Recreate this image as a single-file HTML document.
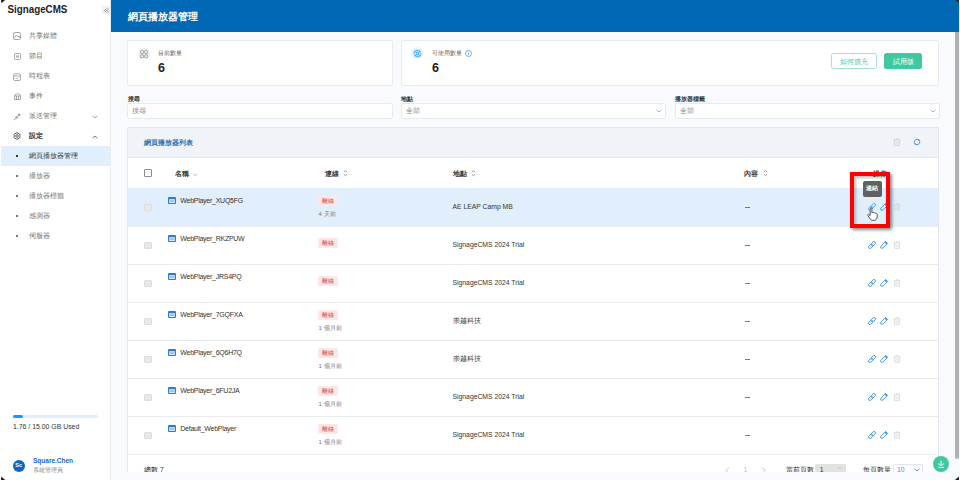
<!DOCTYPE html>
<html><head><meta charset="utf-8">
<style>
*{box-sizing:border-box;margin:0;padding:0}
html,body{width:960px;height:480px;overflow:hidden;background:#f9fafd;font-family:"Liberation Sans",sans-serif;color:#333}
.a{position:absolute}
.t{position:absolute;white-space:nowrap;line-height:1}
#side{left:0;top:0;width:110px;height:480px;background:#fff}
#sideb{left:110px;top:0;width:1px;height:480px;background:#e9ecef}
#hdr{left:111px;top:0;width:848px;height:32px;background:#0068b5}
.mi{font-size:7px;color:#757575}
.mic{left:13px;width:8px;height:8px;border:1px solid #888;border-radius:1.5px}
.card{background:#fff;border:1px solid #e8ebef;border-radius:2px}
.lbl{font-size:6px;color:#222}
.inp{background:#fff;border:1px solid #e6e9ed;border-radius:2.5px}
.ph{font-size:6.5px;color:#888}
.row{left:128px;width:810px;height:38.25px;border-bottom:1px solid #e9ecef}
.nm{font-size:7px;letter-spacing:-0.26px;color:#333}
.txt{font-size:6.8px;color:#333}
.cb{left:144px;width:7.5px;height:7.5px;background:#e9e9e9;border:1px solid #dedede;border-radius:1px}
.pic{left:168px;width:7.7px;height:6.7px;background:#1e78c8;border-radius:1px}
.tag{left:318px;width:20px;height:10.3px;background:#fde6e6;border-radius:2px;color:#c93c3c;font-size:5.8px;text-align:center;line-height:11px}
.sub{left:318.5px;font-size:6px;color:#777}
.ic{position:absolute}
</style></head><body>
<!-- sidebar -->
<div class="a" id="side"></div>
<div class="a" id="sideb"></div>
<div class="t" style="left:7.5px;top:5px;font-size:9.8px;font-weight:bold;color:#222;transform:scaleY(1.14);transform-origin:0 8.3px">SignageCMS</div>
<div class="a" style="left:102px;top:6px;width:8px;height:8px;background:#f0f0f0"></div>
<svg class="ic" style="left:103.5px;top:8px" width="5.5" height="5" viewBox="0 0 5.5 5" fill="none" stroke="#777" stroke-width="0.8"><path d="M2.6 0.5 L0.7 2.5 L2.6 4.5 M4.9 0.5 L3 2.5 L4.9 4.5"/></svg>

<div class="t mi" style="left:29px;top:32px">共享媒體</div>
<div class="t mi" style="left:29px;top:52px">節目</div>
<div class="t mi" style="left:29px;top:72px">時程表</div>
<div class="t mi" style="left:29px;top:92px">事件</div>
<div class="t mi" style="left:29px;top:112px">派送管理</div>
<div class="t mi" style="left:29px;top:132px;color:#333;font-weight:bold">設定</div>
<div class="a" style="left:1px;top:146px;width:109px;height:20px;background:#e1eefc"></div>
<div class="t mi" style="left:29px;top:152px;color:#333">網頁播放器管理</div>
<div class="t mi" style="left:29px;top:172px">播放器</div>
<div class="t mi" style="left:29px;top:192px">播放器標籤</div>
<div class="t mi" style="left:29px;top:212px">感測器</div>
<div class="t mi" style="left:29px;top:232px">伺服器</div>

<div class="a" style="left:13px;top:414.5px;width:85px;height:3.5px;background:#e3effc;border-radius:2px"></div>
<div class="a" style="left:13px;top:414.5px;width:10px;height:3.5px;background:#2196f3;border-radius:2px"></div>
<div class="t" style="left:13px;top:424px;font-size:6.9px;color:#333">1.76 / 15.00 GB Used</div>
<div class="a" style="left:13px;top:459.5px;width:12px;height:12px;border-radius:50%;background:#0d66c2"></div>
<div class="t" style="left:15.3px;top:463px;font-size:5.5px;color:#fff;font-weight:bold">Sc</div>
<div class="t" style="left:33px;top:457.5px;font-size:6.5px;font-weight:bold;color:#1a67bd">Square.Chen</div>
<div class="t" style="left:33px;top:467px;font-size:6px;color:#888">系統管理員</div>

<!-- header -->
<div class="a" id="hdr"></div>
<div class="t" style="left:127.5px;top:11.5px;font-size:10px;font-weight:bold;color:#fff">網頁播放器管理</div>

<!-- scrollbar -->
<div class="a" style="left:955px;top:32px;width:4px;height:426.5px;background:#b0b0b0;border-radius:0 0 2px 2px"></div>

<!-- stat cards -->
<div class="a card" style="left:127px;top:40px;width:265.5px;height:45.5px"></div>
<div class="a" style="left:138px;top:47.8px;width:12px;height:12px;border-radius:50%;background:#f1f1f1"></div>
<div class="t lbl" style="left:158px;top:50.3px;color:#666">目前數量</div>
<div class="t" style="left:158px;top:62px;font-size:12.5px;font-weight:bold;color:#222">6</div>

<div class="a card" style="left:401px;top:40px;width:537.5px;height:45.5px"></div>
<div class="a" style="left:411.3px;top:47.3px;width:12px;height:12px;border-radius:50%;background:#e6f2fd"></div>
<div class="t lbl" style="left:431.5px;top:50.3px;color:#666">可使用數量</div>
<div class="t" style="left:432px;top:62px;font-size:12.5px;font-weight:bold;color:#222">6</div>
<div class="a" style="left:831px;top:53.3px;width:46px;height:16.2px;border:1px solid #a3e2ce;border-radius:2.5px"></div>
<div class="t" style="left:839.8px;top:59px;font-size:6.8px;color:#5cc9a8">如何擴充</div>
<div class="a" style="left:884.3px;top:53.3px;width:38px;height:16.2px;background:#3fc9a0;border-radius:2.5px"></div>
<div class="t" style="left:893px;top:59px;font-size:6.8px;color:#fff">試用版</div>

<!-- filters -->
<div class="t lbl" style="left:127.5px;top:96px;font-weight:bold;color:#333">搜尋</div>
<div class="a inp" style="left:127px;top:103px;width:266px;height:16.3px"></div>
<div class="t ph" style="left:132px;top:107.5px">搜尋</div>
<div class="t lbl" style="left:401px;top:96px;font-weight:bold;color:#333">地點</div>
<div class="a inp" style="left:400.8px;top:103px;width:265.7px;height:16.3px"></div>
<div class="t ph" style="left:405.5px;top:107.5px">全部</div>
<div class="t lbl" style="left:675px;top:96px;font-weight:bold;color:#333">播放器標籤</div>
<div class="a inp" style="left:674.8px;top:103px;width:265.7px;height:16.3px"></div>
<div class="t ph" style="left:679.5px;top:107.5px">全部</div>

<!-- table card -->
<div class="a" style="left:127px;top:127px;width:811.5px;height:345px;background:#fff;border:1px solid #e3e6ea;border-bottom:none;border-radius:2px 2px 0 0"></div>
<div class="a" style="left:128px;top:127.5px;width:810px;height:30px;background:#f0f3f7;border-bottom:1px solid #e6e9ed"></div>
<div class="t" style="left:144.3px;top:139.5px;font-size:6.6px;font-weight:bold;color:#2b6fb5">網頁播放器列表</div>

<!-- header row -->
<div class="a" style="left:128px;top:187.5px;width:810px;height:1px;background:#e9ecef"></div>
<div class="a" style="left:144.3px;top:169.3px;width:7.5px;height:7.5px;border:1px solid #8c8c8c;border-radius:1px;background:#fff"></div>
<div class="t txt" style="left:174.5px;top:171px;font-weight:bold;color:#3a3a3a">名稱</div>
<div class="t txt" style="left:324.5px;top:171px;font-weight:bold;color:#3a3a3a">連線</div>
<div class="t txt" style="left:452.5px;top:171px;font-weight:bold;color:#3a3a3a">地點</div>
<div class="t txt" style="left:744.3px;top:171px;font-weight:bold;color:#3a3a3a">內容</div>
<div class="t txt" style="left:872.5px;top:171px;font-weight:bold;color:#3a3a3a">操作</div>

<div class="a" style="left:128px;top:188.25px;width:810px;height:37.5px;background:#e1eefc"></div>
<div class="a" style="left:128px;top:226px;width:810px;height:1px;background:#e9ecef"></div>
<div class="a cb" style="top:203.5px"></div>
<svg class="ic" style="left:168px;top:196.7px" width="8" height="7" viewBox="0 0 8 7"><rect x="0" y="0" width="8" height="7" rx="1" fill="#2a7fd0"/><rect x="1.2" y="2.3" width="5.6" height="3.6" fill="#fff"/><path d="M2.6 3 L1.8 4.1 L2.6 5.2 M5.4 3 L6.2 4.1 L5.4 5.2" stroke="#2a7fd0" stroke-width="0.6" fill="none"/><circle cx="4" cy="4.1" r="0.8" fill="#2a7fd0"/></svg>
<div class="t nm" style="left:180.3px;top:196.5px">WebPlayer_XUQ5FG</div>
<div class="a tag" style="top:195.7px">離線</div>
<div class="t sub" style="left:318.5px;top:211px">4 天前</div>
<div class="t txt" style="left:452.5px;top:203.5px">AE LEAP Camp MB</div>
<div class="a" style="left:744.5px;top:207px;width:5.5px;height:0.7px;background:#777"></div>
<svg class="ic" style="left:866px;top:201.0px" width="12" height="12" viewBox="-6 -6 12 12" fill="none" stroke="#4aa3f0" stroke-width="1.05"><g transform="scale(0.8) rotate(45)"><rect x="-1.8" y="-5.4" width="3.6" height="6.4" rx="1.8"/><rect x="-1.8" y="-1" width="3.6" height="6.4" rx="1.8"/></g></svg>
<svg class="ic" style="left:878px;top:201.0px" width="12" height="12" viewBox="-6 -6 12 12" fill="none" stroke="#3d8fd6" stroke-width="1.05"><g transform="scale(0.8) rotate(45)"><path d="M-1.7 -4.6 H1.7 V3.2 Q1.7 5.2 0 5.4 Q-1.7 5.2 -1.7 3.2 Z"/><path d="M-1.7 -3.6 H1.7" stroke-width="1.6"/></g></svg>
<svg class="ic" style="left:892.5px;top:203.0px" width="8" height="8" viewBox="0 0 8 8" fill="none" stroke="#d6d6d6" stroke-width="0.8"><path d="M0.6 1.9 H7.4 M2.8 1.9 V0.8 H5.2 V1.9 M1.3 1.9 L1.7 7.4 H6.3 L6.7 1.9 M3.1 3.2 V6.2 M4.9 3.2 V6.2"/></svg>
<div class="a" style="left:128px;top:264px;width:810px;height:1px;background:#e9ecef"></div>
<div class="a cb" style="top:241.5px"></div>
<svg class="ic" style="left:168px;top:234.7px" width="8" height="7" viewBox="0 0 8 7"><rect x="0" y="0" width="8" height="7" rx="1" fill="#2a7fd0"/><rect x="1.2" y="2.3" width="5.6" height="3.6" fill="#fff"/><path d="M2.6 3 L1.8 4.1 L2.6 5.2 M5.4 3 L6.2 4.1 L5.4 5.2" stroke="#2a7fd0" stroke-width="0.6" fill="none"/><circle cx="4" cy="4.1" r="0.8" fill="#2a7fd0"/></svg>
<div class="t nm" style="left:180.3px;top:234.5px">WebPlayer_RKZPUW</div>
<div class="a tag" style="top:238.2px">離線</div>
<div class="t txt" style="left:452.5px;top:241.5px">SignageCMS 2024 Trial</div>
<div class="a" style="left:744.5px;top:245px;width:5.5px;height:0.7px;background:#777"></div>
<svg class="ic" style="left:866px;top:239.0px" width="12" height="12" viewBox="-6 -6 12 12" fill="none" stroke="#3d8fd6" stroke-width="1.05"><g transform="scale(0.8) rotate(45)"><rect x="-1.8" y="-5.4" width="3.6" height="6.4" rx="1.8"/><rect x="-1.8" y="-1" width="3.6" height="6.4" rx="1.8"/></g></svg>
<svg class="ic" style="left:878px;top:239.0px" width="12" height="12" viewBox="-6 -6 12 12" fill="none" stroke="#3d8fd6" stroke-width="1.05"><g transform="scale(0.8) rotate(45)"><path d="M-1.7 -4.6 H1.7 V3.2 Q1.7 5.2 0 5.4 Q-1.7 5.2 -1.7 3.2 Z"/><path d="M-1.7 -3.6 H1.7" stroke-width="1.6"/></g></svg>
<svg class="ic" style="left:892.5px;top:241.0px" width="8" height="8" viewBox="0 0 8 8" fill="none" stroke="#d6d6d6" stroke-width="0.8"><path d="M0.6 1.9 H7.4 M2.8 1.9 V0.8 H5.2 V1.9 M1.3 1.9 L1.7 7.4 H6.3 L6.7 1.9 M3.1 3.2 V6.2 M4.9 3.2 V6.2"/></svg>
<div class="a" style="left:128px;top:302px;width:810px;height:1px;background:#e9ecef"></div>
<div class="a cb" style="top:279.5px"></div>
<svg class="ic" style="left:168px;top:272.7px" width="8" height="7" viewBox="0 0 8 7"><rect x="0" y="0" width="8" height="7" rx="1" fill="#2a7fd0"/><rect x="1.2" y="2.3" width="5.6" height="3.6" fill="#fff"/><path d="M2.6 3 L1.8 4.1 L2.6 5.2 M5.4 3 L6.2 4.1 L5.4 5.2" stroke="#2a7fd0" stroke-width="0.6" fill="none"/><circle cx="4" cy="4.1" r="0.8" fill="#2a7fd0"/></svg>
<div class="t nm" style="left:180.3px;top:272.5px">WebPlayer_JRS4PQ</div>
<div class="a tag" style="top:276.2px">離線</div>
<div class="t txt" style="left:452.5px;top:279.5px">SignageCMS 2024 Trial</div>
<div class="a" style="left:744.5px;top:283px;width:5.5px;height:0.7px;background:#777"></div>
<svg class="ic" style="left:866px;top:277.0px" width="12" height="12" viewBox="-6 -6 12 12" fill="none" stroke="#3d8fd6" stroke-width="1.05"><g transform="scale(0.8) rotate(45)"><rect x="-1.8" y="-5.4" width="3.6" height="6.4" rx="1.8"/><rect x="-1.8" y="-1" width="3.6" height="6.4" rx="1.8"/></g></svg>
<svg class="ic" style="left:878px;top:277.0px" width="12" height="12" viewBox="-6 -6 12 12" fill="none" stroke="#3d8fd6" stroke-width="1.05"><g transform="scale(0.8) rotate(45)"><path d="M-1.7 -4.6 H1.7 V3.2 Q1.7 5.2 0 5.4 Q-1.7 5.2 -1.7 3.2 Z"/><path d="M-1.7 -3.6 H1.7" stroke-width="1.6"/></g></svg>
<svg class="ic" style="left:892.5px;top:279.0px" width="8" height="8" viewBox="0 0 8 8" fill="none" stroke="#d6d6d6" stroke-width="0.8"><path d="M0.6 1.9 H7.4 M2.8 1.9 V0.8 H5.2 V1.9 M1.3 1.9 L1.7 7.4 H6.3 L6.7 1.9 M3.1 3.2 V6.2 M4.9 3.2 V6.2"/></svg>
<div class="a" style="left:128px;top:340px;width:810px;height:1px;background:#e9ecef"></div>
<div class="a cb" style="top:317.5px"></div>
<svg class="ic" style="left:168px;top:310.7px" width="8" height="7" viewBox="0 0 8 7"><rect x="0" y="0" width="8" height="7" rx="1" fill="#2a7fd0"/><rect x="1.2" y="2.3" width="5.6" height="3.6" fill="#fff"/><path d="M2.6 3 L1.8 4.1 L2.6 5.2 M5.4 3 L6.2 4.1 L5.4 5.2" stroke="#2a7fd0" stroke-width="0.6" fill="none"/><circle cx="4" cy="4.1" r="0.8" fill="#2a7fd0"/></svg>
<div class="t nm" style="left:180.3px;top:310.5px">WebPlayer_7GQFXA</div>
<div class="a tag" style="top:309.7px">離線</div>
<div class="t sub" style="left:318.5px;top:325px">1 個月前</div>
<div class="t txt" style="left:452.5px;top:317.5px">崇越科技</div>
<div class="a" style="left:744.5px;top:321px;width:5.5px;height:0.7px;background:#777"></div>
<svg class="ic" style="left:866px;top:315.0px" width="12" height="12" viewBox="-6 -6 12 12" fill="none" stroke="#3d8fd6" stroke-width="1.05"><g transform="scale(0.8) rotate(45)"><rect x="-1.8" y="-5.4" width="3.6" height="6.4" rx="1.8"/><rect x="-1.8" y="-1" width="3.6" height="6.4" rx="1.8"/></g></svg>
<svg class="ic" style="left:878px;top:315.0px" width="12" height="12" viewBox="-6 -6 12 12" fill="none" stroke="#3d8fd6" stroke-width="1.05"><g transform="scale(0.8) rotate(45)"><path d="M-1.7 -4.6 H1.7 V3.2 Q1.7 5.2 0 5.4 Q-1.7 5.2 -1.7 3.2 Z"/><path d="M-1.7 -3.6 H1.7" stroke-width="1.6"/></g></svg>
<svg class="ic" style="left:892.5px;top:317.0px" width="8" height="8" viewBox="0 0 8 8" fill="none" stroke="#d6d6d6" stroke-width="0.8"><path d="M0.6 1.9 H7.4 M2.8 1.9 V0.8 H5.2 V1.9 M1.3 1.9 L1.7 7.4 H6.3 L6.7 1.9 M3.1 3.2 V6.2 M4.9 3.2 V6.2"/></svg>
<div class="a" style="left:128px;top:378px;width:810px;height:1px;background:#e9ecef"></div>
<div class="a cb" style="top:355.5px"></div>
<svg class="ic" style="left:168px;top:348.7px" width="8" height="7" viewBox="0 0 8 7"><rect x="0" y="0" width="8" height="7" rx="1" fill="#2a7fd0"/><rect x="1.2" y="2.3" width="5.6" height="3.6" fill="#fff"/><path d="M2.6 3 L1.8 4.1 L2.6 5.2 M5.4 3 L6.2 4.1 L5.4 5.2" stroke="#2a7fd0" stroke-width="0.6" fill="none"/><circle cx="4" cy="4.1" r="0.8" fill="#2a7fd0"/></svg>
<div class="t nm" style="left:180.3px;top:348.5px">WebPlayer_6Q6H7Q</div>
<div class="a tag" style="top:347.7px">離線</div>
<div class="t sub" style="left:318.5px;top:363px">1 個月前</div>
<div class="t txt" style="left:452.5px;top:355.5px">崇越科技</div>
<div class="a" style="left:744.5px;top:359px;width:5.5px;height:0.7px;background:#777"></div>
<svg class="ic" style="left:866px;top:353.0px" width="12" height="12" viewBox="-6 -6 12 12" fill="none" stroke="#3d8fd6" stroke-width="1.05"><g transform="scale(0.8) rotate(45)"><rect x="-1.8" y="-5.4" width="3.6" height="6.4" rx="1.8"/><rect x="-1.8" y="-1" width="3.6" height="6.4" rx="1.8"/></g></svg>
<svg class="ic" style="left:878px;top:353.0px" width="12" height="12" viewBox="-6 -6 12 12" fill="none" stroke="#3d8fd6" stroke-width="1.05"><g transform="scale(0.8) rotate(45)"><path d="M-1.7 -4.6 H1.7 V3.2 Q1.7 5.2 0 5.4 Q-1.7 5.2 -1.7 3.2 Z"/><path d="M-1.7 -3.6 H1.7" stroke-width="1.6"/></g></svg>
<svg class="ic" style="left:892.5px;top:355.0px" width="8" height="8" viewBox="0 0 8 8" fill="none" stroke="#d6d6d6" stroke-width="0.8"><path d="M0.6 1.9 H7.4 M2.8 1.9 V0.8 H5.2 V1.9 M1.3 1.9 L1.7 7.4 H6.3 L6.7 1.9 M3.1 3.2 V6.2 M4.9 3.2 V6.2"/></svg>
<div class="a" style="left:128px;top:416px;width:810px;height:1px;background:#e9ecef"></div>
<div class="a cb" style="top:393.5px"></div>
<svg class="ic" style="left:168px;top:386.7px" width="8" height="7" viewBox="0 0 8 7"><rect x="0" y="0" width="8" height="7" rx="1" fill="#2a7fd0"/><rect x="1.2" y="2.3" width="5.6" height="3.6" fill="#fff"/><path d="M2.6 3 L1.8 4.1 L2.6 5.2 M5.4 3 L6.2 4.1 L5.4 5.2" stroke="#2a7fd0" stroke-width="0.6" fill="none"/><circle cx="4" cy="4.1" r="0.8" fill="#2a7fd0"/></svg>
<div class="t nm" style="left:180.3px;top:386.5px">WebPlayer_6FU2JA</div>
<div class="a tag" style="top:385.7px">離線</div>
<div class="t sub" style="left:318.5px;top:401px">1 個月前</div>
<div class="t txt" style="left:452.5px;top:393.5px">SignageCMS 2024 Trial</div>
<div class="a" style="left:744.5px;top:397px;width:5.5px;height:0.7px;background:#777"></div>
<svg class="ic" style="left:866px;top:391.0px" width="12" height="12" viewBox="-6 -6 12 12" fill="none" stroke="#3d8fd6" stroke-width="1.05"><g transform="scale(0.8) rotate(45)"><rect x="-1.8" y="-5.4" width="3.6" height="6.4" rx="1.8"/><rect x="-1.8" y="-1" width="3.6" height="6.4" rx="1.8"/></g></svg>
<svg class="ic" style="left:878px;top:391.0px" width="12" height="12" viewBox="-6 -6 12 12" fill="none" stroke="#3d8fd6" stroke-width="1.05"><g transform="scale(0.8) rotate(45)"><path d="M-1.7 -4.6 H1.7 V3.2 Q1.7 5.2 0 5.4 Q-1.7 5.2 -1.7 3.2 Z"/><path d="M-1.7 -3.6 H1.7" stroke-width="1.6"/></g></svg>
<svg class="ic" style="left:892.5px;top:393.0px" width="8" height="8" viewBox="0 0 8 8" fill="none" stroke="#d6d6d6" stroke-width="0.8"><path d="M0.6 1.9 H7.4 M2.8 1.9 V0.8 H5.2 V1.9 M1.3 1.9 L1.7 7.4 H6.3 L6.7 1.9 M3.1 3.2 V6.2 M4.9 3.2 V6.2"/></svg>
<div class="a" style="left:128px;top:454px;width:810px;height:1px;background:#e9ecef"></div>
<div class="a cb" style="top:431.5px"></div>
<svg class="ic" style="left:168px;top:424.7px" width="8" height="7" viewBox="0 0 8 7"><rect x="0" y="0" width="8" height="7" rx="1" fill="#2a7fd0"/><rect x="1.2" y="2.3" width="5.6" height="3.6" fill="#fff"/><path d="M2.6 3 L1.8 4.1 L2.6 5.2 M5.4 3 L6.2 4.1 L5.4 5.2" stroke="#2a7fd0" stroke-width="0.6" fill="none"/><circle cx="4" cy="4.1" r="0.8" fill="#2a7fd0"/></svg>
<div class="t nm" style="left:180.3px;top:424.5px">Default_WebPlayer</div>
<div class="a tag" style="top:423.7px">離線</div>
<div class="t sub" style="left:318.5px;top:439px">1 個月前</div>
<div class="t txt" style="left:452.5px;top:431.5px">SignageCMS 2024 Trial</div>
<div class="a" style="left:744.5px;top:435px;width:5.5px;height:0.7px;background:#777"></div>
<svg class="ic" style="left:866px;top:429.0px" width="12" height="12" viewBox="-6 -6 12 12" fill="none" stroke="#3d8fd6" stroke-width="1.05"><g transform="scale(0.8) rotate(45)"><rect x="-1.8" y="-5.4" width="3.6" height="6.4" rx="1.8"/><rect x="-1.8" y="-1" width="3.6" height="6.4" rx="1.8"/></g></svg>
<svg class="ic" style="left:878px;top:429.0px" width="12" height="12" viewBox="-6 -6 12 12" fill="none" stroke="#3d8fd6" stroke-width="1.05"><g transform="scale(0.8) rotate(45)"><path d="M-1.7 -4.6 H1.7 V3.2 Q1.7 5.2 0 5.4 Q-1.7 5.2 -1.7 3.2 Z"/><path d="M-1.7 -3.6 H1.7" stroke-width="1.6"/></g></svg>
<svg class="ic" style="left:892.5px;top:431.0px" width="8" height="8" viewBox="0 0 8 8" fill="none" stroke="#d6d6d6" stroke-width="0.8"><path d="M0.6 1.9 H7.4 M2.8 1.9 V0.8 H5.2 V1.9 M1.3 1.9 L1.7 7.4 H6.3 L6.7 1.9 M3.1 3.2 V6.2 M4.9 3.2 V6.2"/></svg>


<!-- sidebar icons -->
<svg class="ic" style="left:13px;top:32px" width="8" height="8" viewBox="0 0 8 8" fill="none" stroke="#999" stroke-width="0.85"><rect x="0.5" y="0.5" width="7" height="7" rx="1.5"/><path d="M1 6.5 L3.5 3 L5 5 L6 4 L7 6"/></svg>
<svg class="ic" style="left:13.5px;top:52.5px" width="7" height="7" viewBox="0 0 7 7" fill="none" stroke="#999" stroke-width="0.85"><rect x="0.5" y="0.5" width="6" height="6" rx="0.8"/><rect x="2.2" y="2.4" width="2.6" height="2.2" fill="#aaa" stroke="none"/></svg>
<svg class="ic" style="left:13.3px;top:72.5px" width="8" height="8" viewBox="0 0 8 8" fill="none" stroke="#999" stroke-width="0.85"><rect x="0.5" y="0.8" width="7" height="6.7" rx="1.5"/><path d="M0.5 3 H7.5 M2.5 5 L3.5 6 M5 4.5 L4 6"/></svg>
<svg class="ic" style="left:14px;top:92px" width="7" height="8" viewBox="0 0 7 8" fill="none" stroke="#999" stroke-width="0.85"><path d="M0.5 7.5 V3 Q3.5 0 6.5 3 V7.5 Z M0.5 4 H6.5 M2.5 4 V7.5 M4.5 4 V7.5"/></svg>
<svg class="ic" style="left:13.3px;top:112.5px" width="8" height="8" viewBox="0 0 8 8" fill="none" stroke="#999" stroke-width="0.85"><path d="M1.5 6.5 L6.8 1.2 M2 4.5 L4 3 M3.5 6 L5 4 M1 7.2 L2 6"/><path d="M5 1.5 L7 1 L6.5 3 Z" fill="#8a8a8a"/></svg>
<svg class="ic" style="left:13px;top:132px" width="8" height="8" viewBox="0 0 8 8" fill="none" stroke="#555" stroke-width="0.9"><path d="M4 0.6 L6.9 2.3 V5.7 L4 7.4 L1.1 5.7 V2.3 Z"/><circle cx="4" cy="4" r="1.3"/></svg>
<svg class="ic" style="left:91.5px;top:114.5px" width="6" height="4" viewBox="0 0 6 4" fill="none" stroke="#888" stroke-width="0.8"><path d="M0.5 0.8 L3 3 L5.5 0.8"/></svg>
<svg class="ic" style="left:91.5px;top:134.5px" width="6" height="4" viewBox="0 0 6 4" fill="none" stroke="#555" stroke-width="0.8"><path d="M0.5 3.2 L3 1 L5.5 3.2"/></svg>
<div class="a" style="left:16.3px;top:155.2px;width:1.6px;height:1.6px;background:#333"></div>
<div class="a" style="left:16.3px;top:175.2px;width:1.6px;height:1.6px;background:#777"></div>
<div class="a" style="left:16.3px;top:195.2px;width:1.6px;height:1.6px;background:#777"></div>
<div class="a" style="left:16.3px;top:215.2px;width:1.6px;height:1.6px;background:#777"></div>
<div class="a" style="left:16.3px;top:235.2px;width:1.6px;height:1.6px;background:#777"></div>

<!-- card icons -->
<svg class="ic" style="left:140px;top:50px" width="8.2" height="8.2" viewBox="0 0 8.2 8.2" fill="none" stroke="#8c8c8c" stroke-width="0.85"><rect x="0.5" y="0.5" width="3" height="3" rx="1"/><rect x="4.7" y="0.5" width="3" height="3" rx="1"/><rect x="0.5" y="4.7" width="3" height="3" rx="1"/><rect x="4.7" y="4.7" width="3" height="3" rx="1"/></svg>
<svg class="ic" style="left:412.5px;top:48.7px" width="9" height="9" viewBox="0 0 9 9" fill="none" stroke="#5cb2f5" stroke-width="1.2"><path d="M1 4.5 A3.5 3.5 0 0 1 7.5 3"/><path d="M8 4.5 A3.5 3.5 0 0 1 1.5 6"/><circle cx="4.5" cy="4.5" r="1.4"/><path d="M6.3 1.5 L8 3.2 L5.8 3.5 Z M2.7 7.5 L1 5.8 L3.2 5.5 Z" fill="#5cb2f5" stroke="none"/></svg>
<svg class="ic" style="left:465.2px;top:49.6px" width="7" height="7" viewBox="0 0 7 7" fill="none" stroke="#4d9be0" stroke-width="0.8"><circle cx="3.5" cy="3.5" r="3"/><path d="M3.5 3 V5.2 M3.5 1.8 V2.4"/></svg>

<!-- select chevrons -->
<svg class="ic" style="left:656px;top:109.3px" width="6" height="4" viewBox="0 0 6 4" fill="none" stroke="#999" stroke-width="0.8"><path d="M0.5 0.8 L3 3 L5.5 0.8"/></svg>
<svg class="ic" style="left:929.5px;top:109.3px" width="6" height="4" viewBox="0 0 6 4" fill="none" stroke="#999" stroke-width="0.8"><path d="M0.5 0.8 L3 3 L5.5 0.8"/></svg>

<!-- table header icons -->
<svg class="ic" style="left:892.5px;top:138px" width="8" height="8" viewBox="0 0 8 8" fill="none" stroke="#cfcfcf" stroke-width="0.8"><path d="M0.6 1.9 H7.4 M2.8 1.9 V0.8 H5.2 V1.9 M1.3 1.9 L1.7 7.4 H6.3 L6.7 1.9 M3.1 3.2 V6.2 M4.9 3.2 V6.2"/></svg>
<svg class="ic" style="left:912.5px;top:138.2px" width="8" height="8" viewBox="0 0 8 8" fill="none" stroke="#3d8fd6" stroke-width="1"><path d="M1.2 4.6 A3 3 0 0 1 6.4 2.2"/><path d="M6.8 3.4 A3 3 0 0 1 1.6 5.8"/><path d="M5.6 1.3 L7.1 2.9 L5.3 3 Z M2.4 6.7 L0.9 5.1 L2.7 5 Z" fill="#3d8fd6" stroke="none"/></svg>

<!-- sort icons -->
<svg class="ic" style="left:193.3px;top:172.8px" width="4.5" height="3.5" viewBox="0 0 5 4" fill="none" stroke="#999" stroke-width="0.8"><path d="M0.5 0.8 L2.5 3 L4.5 0.8"/></svg>
<svg class="ic" style="left:342.5px;top:169.7px" width="5" height="7" viewBox="0 0 5 7" fill="none" stroke="#8c8c8c" stroke-width="0.85"><path d="M0.8 2.1 L2.5 0.7 L4.2 2.1 M0.8 4.3 L2.5 5.7 L4.2 4.3"/></svg>
<svg class="ic" style="left:470.5px;top:169.7px" width="5" height="7" viewBox="0 0 5 7" fill="none" stroke="#8c8c8c" stroke-width="0.85"><path d="M0.8 2.1 L2.5 0.7 L4.2 2.1 M0.8 4.3 L2.5 5.7 L4.2 4.3"/></svg>
<svg class="ic" style="left:763px;top:169.7px" width="5" height="7" viewBox="0 0 5 7" fill="none" stroke="#8c8c8c" stroke-width="0.85"><path d="M0.8 2.1 L2.5 0.7 L4.2 2.1 M0.8 4.3 L2.5 5.7 L4.2 4.3"/></svg>

<!-- pagination -->
<div class="t" style="left:144px;top:467px;font-size:6.8px;color:#333">總數 7</div>
<svg class="ic" style="left:724.5px;top:466.5px" width="5" height="7" viewBox="0 0 5 7" fill="none" stroke="#bbb" stroke-width="0.9"><path d="M4 0.5 L1 3.5 L4 6.5"/></svg>
<div class="t" style="left:743.5px;top:466.5px;font-size:6.8px;color:#bbb">1</div>
<svg class="ic" style="left:760.8px;top:466.5px" width="5" height="7" viewBox="0 0 5 7" fill="none" stroke="#bbb" stroke-width="0.9"><path d="M1 0.5 L4 3.5 L1 6.5"/></svg>
<div class="t" style="left:785.5px;top:467.3px;font-size:6.8px;color:#333">當前頁數</div>
<div class="a" style="left:815.2px;top:464px;width:31px;height:14px;background:#e2e2e2;border-radius:2px"></div>
<div class="t" style="left:819.8px;top:467.3px;font-size:6.8px;color:#333">1</div>
<svg class="ic" style="left:836.5px;top:466px" width="5" height="4" viewBox="0 0 5 4" fill="none" stroke="#bbb" stroke-width="0.7"><path d="M0.5 3 L2.5 1 L4.5 3"/></svg>
<div class="t" style="left:862.5px;top:467.3px;font-size:6.8px;color:#333">每頁數量</div>
<div class="a" style="left:892.7px;top:464px;width:30px;height:14px;background:#fff;border:1px solid #e3e6ea;border-radius:2px"></div>
<div class="t" style="left:897px;top:467.3px;font-size:6.8px;color:#3d8fd6">10</div>
<svg class="ic" style="left:913.8px;top:468px" width="6" height="4" viewBox="0 0 6 4" fill="none" stroke="#3d8fd6" stroke-width="0.9"><path d="M0.5 0.8 L3 3 L5.5 0.8"/></svg>

<!-- bottom band -->
<div class="a" style="left:111px;top:472px;width:843px;height:8px;background:#f9fafd"></div>

<!-- FAB -->
<div class="a" style="left:932.5px;top:455.8px;width:16.3px;height:16.3px;border-radius:50%;background:#3fc8a0"></div>
<svg class="ic" style="left:936.6px;top:459.8px" width="8" height="8" viewBox="0 0 8 8" fill="none" stroke="#fff" stroke-width="1"><path d="M4 0.6 V6 M1.2 3.6 L4 6 L6.8 3.6 M1 7.4 H7"/></svg>
<!-- red highlight box -->
<div class="a" style="left:850px;top:172px;width:40px;height:55.5px;border:4.3px solid #ff0000;box-shadow:2px 2px 3px rgba(0,0,0,0.45), inset 2px 2px 3px rgba(0,0,0,0.25)"></div>
<!-- tooltip -->
<div class="a" style="left:862.5px;top:180.5px;width:19.5px;height:16px;background:#616161;border-radius:2px"></div>
<div class="t" style="left:866.3px;top:185.3px;font-size:6px;font-weight:bold;color:#fff">連結</div>
<!-- hand cursor -->
<svg class="ic" style="left:866.5px;top:206.5px" width="12" height="14" viewBox="0 0 12 14"><path d="M3.2 1.2 Q4.2 0.4 4.9 1.2 V6 L5.5 5.6 Q6.5 5.2 7 6 L7.3 5.9 Q8.3 5.6 8.8 6.5 Q9.8 6.4 10.2 7.4 V10 Q10 12.5 8 13.3 H5 Q3.5 12.8 2.5 11 L0.8 8.4 Q0.6 7.5 1.5 7.3 L3.2 8.6 Z" fill="#fff" stroke="#333" stroke-width="0.8"/></svg>
<!-- corner artifacts -->
<svg class="ic" style="left:0;top:0" width="6" height="4"><path d="M1 0 H5.2 L1.4 3.2 Z" fill="#1a1a1a"/></svg>
<svg class="ic" style="left:0;top:476px" width="6" height="4"><path d="M1.3 0.4 L5.2 4 H1 Z" fill="#1a1a1a"/></svg>
<svg class="ic" style="left:954px;top:0" width="6" height="4"><path d="M1.3 0 H5 V3 Z" fill="#2a2a2a"/></svg>
<svg class="ic" style="left:954px;top:476px" width="6" height="4"><path d="M4.8 0.4 L5 4 H1 Z" fill="#1a1a1a"/></svg>
<div class="a" style="left:959px;top:0;width:1px;height:480px;background:#fafbfe"></div>
</body></html>
